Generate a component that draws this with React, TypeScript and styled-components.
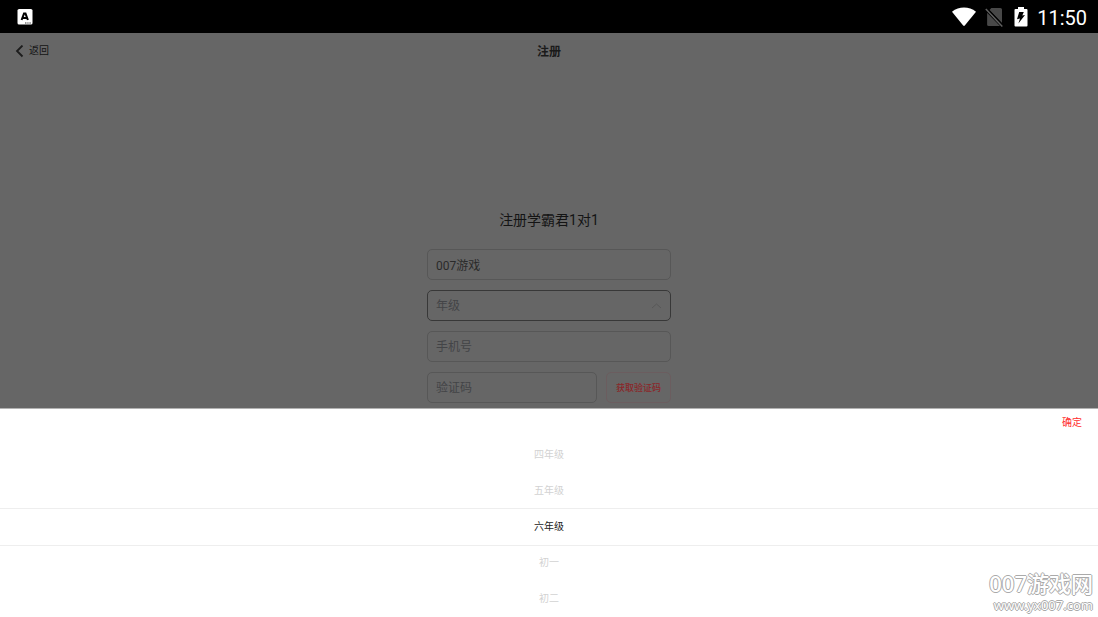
import React, { useState } from "react";
import styled, { createGlobalStyle } from "styled-components";

const GlobalStyle = createGlobalStyle`
  *, *::before, *::after { box-sizing: border-box; }
  body {
    margin: 0;
    background: #666;
    font-family: Roboto, "Noto Sans CJK SC", sans-serif;
  }
  button, input { font-family: inherit; margin: 0; }
`;

const Page = styled.div`
  position: relative;
  display: flex;
  flex-direction: column;
  min-height: 100vh;
  background: #666;
`;

const StatusBar = styled.header`
  display: flex;
  align-items: center;
  justify-content: space-between;
  height: 33px;
  padding: 0 11px 0 17px;
  background: #000;
`;

const StatusIcons = styled.div`
  display: flex;
  align-items: center;
  gap: 9px;
`;

const Clock = styled.time`
  color: #fff;
  font-size: 20px;
  font-weight: 400;
  line-height: 24px;
  padding-top: 2px;
`;

const NavBar = styled.nav`
  display: grid;
  grid-template-columns: 1fr auto 1fr;
  align-items: center;
  height: 36px;
  padding: 0 15px;
`;

const BackButton = styled.button`
  display: flex;
  align-items: center;
  justify-self: start;
  gap: 5px;
  padding: 0;
  border: 0;
  background: none;
  color: #141414;
  font-size: 10px;
  line-height: 16px;
`;

const NavTitle = styled.h1`
  margin: 0;
  padding-top: 2px;
  color: #1a1a1a;
  font-size: 12px;
  font-weight: 700;
  line-height: 18px;
`;

const Form = styled.form`
  display: flex;
  flex-direction: column;
  gap: 10px;
  width: 244px;
  margin: 141px auto 0;
`;

const FormTitle = styled.h2`
  margin: 0 0 9px;
  color: #141414;
  font-size: 14px;
  font-weight: 400;
  line-height: 20px;
  text-align: center;
`;

const Field = styled.div<{ $active?: boolean }>`
  display: flex;
  align-items: center;
  width: 100%;
  min-width: 0;
  height: 31px;
  padding: 0 8px;
  border: 1px solid ${(p) => (p.$active ? "#383838" : "#575757")};
  border-radius: 5px;
`;

const FieldInput = styled.input`
  flex: 1;
  min-width: 0;
  height: 28px;
  padding: 0;
  border: 0;
  outline: 0;
  background: transparent;
  color: #2a2a2a;
  font-size: 12px;
  &::placeholder { color: #434447; opacity: 1; }
`;

const FieldRow = styled.div`
  display: flex;
  gap: 9px;
`;

const CodeButton = styled.button`
  flex: none;
  width: 65px;
  height: 31px;
  padding: 0;
  border: 1px solid #6b5d5f;
  border-radius: 5px;
  background: none;
  color: #8a2629;
  font-size: 9px;
  font-weight: 500;
`;

const Sheet = styled.section`
  position: absolute;
  right: 0;
  bottom: 0;
  left: 0;
  background: #fff;
  border-top: 1px solid #b2b2b2;
`;

const SheetBar = styled.div`
  display: flex;
  justify-content: flex-end;
  align-items: center;
  height: 28px;
  padding: 0 16px;
`;

const ConfirmButton = styled.button`
  padding: 0;
  border: 0;
  background: none;
  color: #ff2d2d;
  font-size: 10px;
  line-height: 16px;
`;

const Wheel = styled.div`
  display: flex;
  flex-direction: column;
`;

const WheelOption = styled.button<{ $selected: boolean }>`
  height: 36px;
  padding: 0;
  border: 0;
  background: none;
  color: ${(p) => (p.$selected ? "#222" : "#d2d2d2")};
  font-size: 10px;
  line-height: 16px;
  box-shadow: ${(p) => (p.$selected ? "0 -1px #eee, 0 1px #eee" : "none")};
`;

const Watermark = styled.aside`
  position: absolute;
  right: 5px;
  bottom: 3px;
  display: flex;
  flex-direction: column;
  align-items: flex-end;
  color: #fff;
  font-family: "Noto Sans", "Noto Sans CJK SC", sans-serif;
  text-shadow: 1px 0 #aaa, -1px 0 #aaa, 0 1px #aaa, 0 -1px #aaa;
  pointer-events: none;
`;

const WatermarkName = styled.span`
  font-size: 22px;
  font-weight: 500;
  line-height: 26px;
`;

const WatermarkSite = styled.span`
  font-size: 13px;
  line-height: 18px;
`;

const grades = ["四年级", "五年级", "六年级", "初一", "初二"];

function AppIcon() {
  return (
    <svg width="16" height="16" viewBox="0 0 16 16" aria-hidden="true">
      <rect x="0.5" y="0" width="15" height="15.6" rx="1.6" fill="#fff" />
      <path d="M4.6 11 7 4.6h1.5L10.9 11M5.7 8.9h4.1" fill="none" stroke="#000" strokeWidth="2" />
      <path d="M8 14h1.5M10.3 14h1.3M12.4 14h1.4" stroke="#333" />
    </svg>
  );
}

function WifiIcon() {
  return (
    <svg width="24" height="20" viewBox="0 0 24 20" aria-hidden="true">
      <path d="M0 4.7C7-.8 17-.8 24 4.7L12.8 18.5q-.8.9-1.6 0Z" fill="#fff" />
    </svg>
  );
}

function NoSimIcon() {
  return (
    <svg width="20" height="20" viewBox="0 0 20 20" aria-hidden="true">
      <path d="M6.3 1h9q1.7 0 1.7 1.6V16L4.5 3Z" fill="#484848" />
      <path d="M2.1 5.8 15 19H3.7q-1.6 0-1.6-1.6Z" fill="#484848" />
      <path d="m1.5 1 17 18" stroke="#000" strokeWidth="1.5" />
      <path d="m.8 2 16.5 17.5" stroke="#606060" strokeWidth="1.5" />
    </svg>
  );
}

function BatteryIcon() {
  return (
    <svg width="14" height="20" viewBox="0 0 14 20" aria-hidden="true">
      <path d="M4 0h6v2h2.5q1 0 1 1v15.500q0 1-1 1h-11q-1 0-1-1V3q0-1 1-1H4Z" fill="#fff" />
      <path d="M5.2 5h4.6L8.3 8.6l2.7-.6L4.4 16.6 6 11.5l-3 .8Z" fill="#000" />
    </svg>
  );
}

export default function App() {
  const [grade, setGrade] = useState("六年级");
  const [name, setName] = useState("007游戏");

  return (
    <>
      <GlobalStyle />
      <Page>
        <StatusBar>
          <AppIcon />
          <StatusIcons>
            <WifiIcon />
            <NoSimIcon />
            <BatteryIcon />
            <Clock>11:50</Clock>
          </StatusIcons>
        </StatusBar>
        <NavBar>
          <BackButton type="button">
            <svg width="9" height="13" viewBox="0 0 9 13" aria-hidden="true">
              <path d="M7.5.5 2 6l5.5 5.5" fill="none" stroke="#1c1c1c" strokeWidth="1.8" />
            </svg>
            返回
          </BackButton>
          <NavTitle>注册</NavTitle>
        </NavBar>
        <Form onSubmit={(e) => e.preventDefault()}>
          <FormTitle>注册学霸君1对1</FormTitle>
          <Field>
            <FieldInput aria-label="姓名" value={name} onChange={(e) => setName(e.target.value)} />
          </Field>
          <Field $active>
            <FieldInput aria-label="年级" placeholder="年级" readOnly />
            <svg width="11" height="6" viewBox="0 0 11 6" aria-hidden="true">
              <path d="m1 5 4.5-4L10 5" fill="none" stroke="#585858" />
            </svg>
          </Field>
          <Field>
            <FieldInput aria-label="手机号" type="tel" placeholder="手机号" />
          </Field>
          <FieldRow>
            <Field>
              <FieldInput aria-label="验证码" placeholder="验证码" />
            </Field>
            <CodeButton type="button">获取验证码</CodeButton>
          </FieldRow>
        </Form>
        <Sheet>
          <SheetBar>
            <ConfirmButton type="button">确定</ConfirmButton>
          </SheetBar>
          <Wheel role="listbox" aria-label="年级">
            {grades.map((item) => (
              <WheelOption
                key={item}
                type="button"
                role="option"
                aria-selected={item === grade}
                $selected={item === grade}
                onClick={() => setGrade(item)}
              >
                {item}
              </WheelOption>
            ))}
          </Wheel>
        </Sheet>
        <Watermark>
          <WatermarkName>007游戏网</WatermarkName>
          <WatermarkSite>www.yx007.com</WatermarkSite>
        </Watermark>
      </Page>
    </>
  );
}
